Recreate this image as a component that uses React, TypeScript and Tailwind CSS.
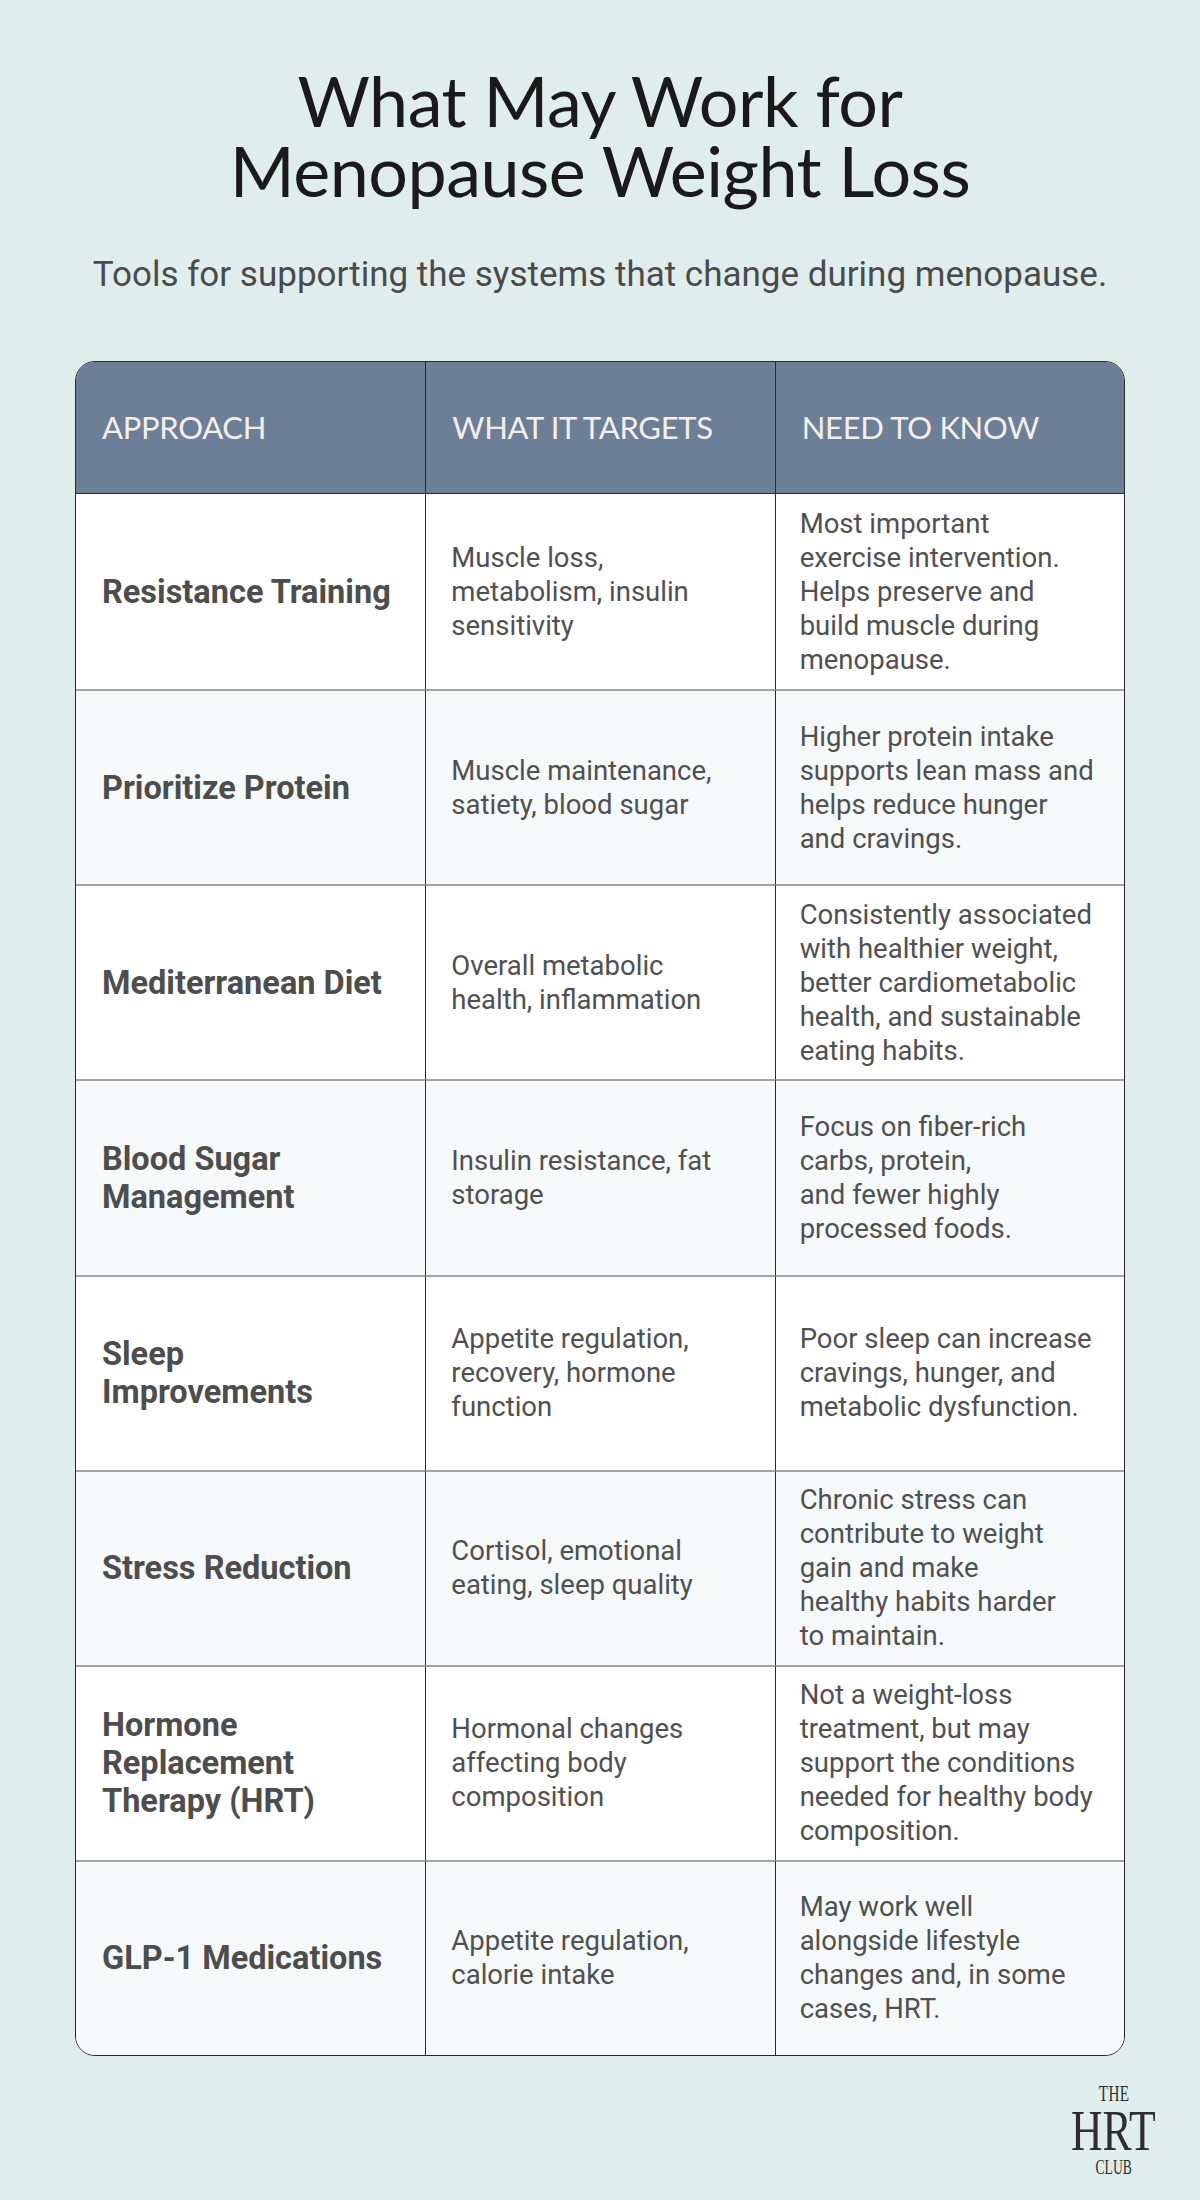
import React from 'react';

// ── Table data ──────────────────────────────────────────────────────

interface Row {
  approach: string[];
  targets: string[];
  know: string[];
}

const ROWS: Row[] = [
  {
    approach: ['Resistance Training'],
    targets: ['Muscle loss,', 'metabolism, insulin', 'sensitivity'],
    know: ['Most important', 'exercise intervention.', 'Helps preserve and', 'build muscle during', 'menopause.'],
  },
  {
    approach: ['Prioritize Protein'],
    targets: ['Muscle maintenance,', 'satiety, blood sugar'],
    know: ['Higher protein intake', 'supports lean mass and', 'helps reduce hunger', 'and cravings.'],
  },
  {
    approach: ['Mediterranean Diet'],
    targets: ['Overall metabolic', 'health, inflammation'],
    know: ['Consistently associated', 'with healthier weight,', 'better cardiometabolic', 'health, and sustainable', 'eating habits.'],
  },
  {
    approach: ['Blood Sugar', 'Management'],
    targets: ['Insulin resistance, fat', 'storage'],
    know: ['Focus on fiber-rich', 'carbs, protein,', 'and fewer highly', 'processed foods.'],
  },
  {
    approach: ['Sleep', 'Improvements'],
    targets: ['Appetite regulation,', 'recovery, hormone', 'function'],
    know: ['Poor sleep can increase', 'cravings, hunger, and', 'metabolic dysfunction.'],
  },
  {
    approach: ['Stress Reduction'],
    targets: ['Cortisol, emotional', 'eating, sleep quality'],
    know: ['Chronic stress can', 'contribute to weight', 'gain and make', 'healthy habits harder', 'to maintain.'],
  },
  {
    approach: ['Hormone', 'Replacement', 'Therapy (HRT)'],
    targets: ['Hormonal changes', 'affecting body', 'composition'],
    know: ['Not a weight-loss', 'treatment, but may', 'support the conditions', 'needed for healthy body', 'composition.'],
  },
  {
    approach: ['GLP-1 Medications'],
    targets: ['Appetite regulation,', 'calorie intake'],
    know: ['May work well', 'alongside lifestyle', 'changes and, in some', 'cases, HRT.'],
  },
];

function Lines({ lines }: { lines: string[] }) {
  return (
    <>
      {lines.map((l, i) => (
        <span key={i} className="block whitespace-nowrap">{l}</span>
      ))}
    </>
  );
}

// ── Logo ────────────────────────────────────────────────────────────

function HrtLogo() {
  return (
    <div className="flex flex-col items-center text-[#2e2e2e] font-['Liberation_Serif',serif] leading-none">
      <span className="text-[23px] scale-x-[0.66] tracking-[0.5px]">THE</span>
      <span className="text-[56px] scale-x-[0.78] -mt-[2px]">HRT</span>
      <span className="text-[20px] scale-x-[0.68] -mt-[2px]">CLUB</span>
    </div>
  );
}

// ── Page ────────────────────────────────────────────────────────────

export default function App() {
  return (
    <div className="w-[1200px] min-h-[2200px] bg-[#e0eded] font-['Roboto',sans-serif]">
      {/* Heading */}
      <div className="pt-[65px] text-center">
        <h1 className="text-[70px] leading-[70px] text-[#1a1a1a] font-['Lato',sans-serif] tracking-[-0.5px]">
          What May Work for
          <br />
          Menopause Weight Loss
        </h1>
        <p className="mt-[50px] text-[35px] leading-[40px] text-[#4a4a4a]">
          Tools for supporting the systems that change during menopause.
        </p>
      </div>

      {/* Table */}
      <div className="mx-[75px] mt-[66px] h-[1695px] rounded-[20px] border-[1.5px] border-[#2a2a2a] overflow-hidden grid grid-cols-3 grid-rows-[132px_repeat(8,1fr)]">
        {['APPROACH', 'WHAT IT TARGETS', 'NEED TO KNOW'].map((h, i) => (
          <div
            key={h}
            className={`bg-[#6d7f97] flex items-center pl-[26px] border-b-[1.5px] border-[#2a2a2a] text-[#f4eee9] text-[31px] font-['Lato',sans-serif] tracking-[-0.3px] ${i > 0 ? 'border-l border-l-[#2a2a2a]' : ''}`}
          >
            {h}
          </div>
        ))}

        {ROWS.map((r, ri) => {
          const bg = ri % 2 === 0 ? 'bg-white' : 'bg-[#f5f9fa]';
          const top = ri > 0 ? 'border-t-2 border-t-[#a3a3a3]' : '';
          return (
            <React.Fragment key={ri}>
              <div className={`${bg} ${top} flex flex-col justify-center pl-[26px] text-[32.5px] leading-[38px] font-bold text-[#4d4d4d]`}>
                <Lines lines={r.approach} />
              </div>
              <div className={`${bg} ${top} border-l border-l-[#2a2a2a] flex flex-col justify-center pl-[25px] text-[27.5px] leading-[34px] text-[#505050]`}>
                <Lines lines={r.targets} />
              </div>
              <div className={`${bg} ${top} border-l border-l-[#2a2a2a] flex flex-col justify-center pl-[24px] text-[27.5px] leading-[34px] text-[#505050]`}>
                <Lines lines={r.know} />
              </div>
            </React.Fragment>
          );
        })}
      </div>

      {/* Footer logo */}
      <div className="flex justify-end pr-[32px] pt-[26px]">
        <HrtLogo />
      </div>
    </div>
  );
}
